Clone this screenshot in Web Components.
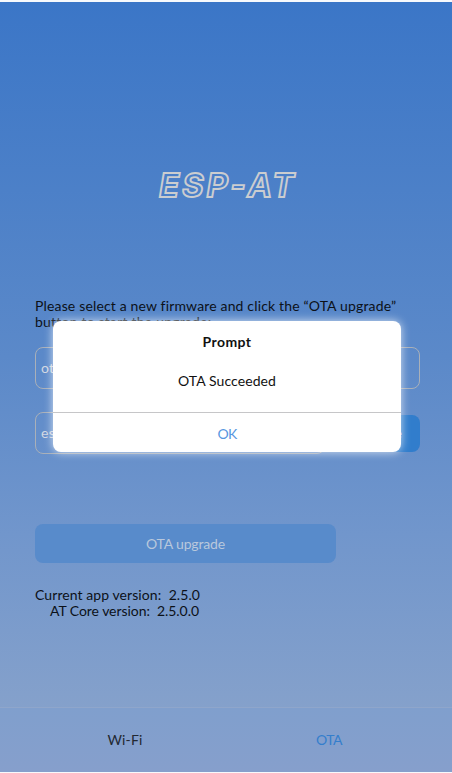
<!DOCTYPE html>
<html lang="en"><head><meta charset="utf-8"><title>ESP-AT</title>
<style>html,body{margin:0;height:100%;overflow:hidden;background:#fff}</style></head><body>
<esp-app></esp-app>
<script>
const make=(name,html,ready)=>customElements.define(name,class extends HTMLElement{
  constructor(){super();this.attachShadow({mode:'open'}).innerHTML=html;}
  connectedCallback(){if(ready)ready(this);}
});
// One line of text, tracked to the width given in its w attribute.
make('fit-text','<style>:host{display:inline-block;white-space:pre}span{display:inline-block}</style><span><slot></slot></span>',el=>{
  const w=+el.getAttribute('w');
  const span=el.shadowRoot.querySelector('span');
  const n=el.textContent.length;
  span.style.letterSpacing='0px';
  const s=(w-span.getBoundingClientRect().width)/n;
  span.style.letterSpacing=s+'px';
});
make('outline-title',`<style>:host{display:block;height:40px;font:italic 700 33px/40px Inter,sans-serif;color:transparent;-webkit-text-stroke:1.9px #cbcdd0;padding-left:159px}</style><slot></slot>`);
make('text-field',`<style>:host{display:flex;box-sizing:border-box;align-items:center;height:42px;border:1px solid #a9b0b9;border-radius:8px;padding-left:5px;color:#d2d8e2}</style><slot></slot>`);
make('action-button',`<style>:host{display:flex;box-sizing:border-box;align-items:center;justify-content:center;border-radius:8px;height:39px;background:#588bcb;color:#b9c8dc}
:host([kind=pick]){height:37px;width:95px;background:#317dcc;color:#d2dbe6;justify-content:flex-end;padding-right:18px}</style><slot></slot>`);
make('tab-bar',`<style>:host{display:flex;box-sizing:border-box;height:65px;border-top:1px solid #8fa6cb;background:linear-gradient(#809fcd,#869fcc);color:#222831}
div{flex:1;display:flex;align-items:center;justify-content:center;box-sizing:border-box;padding-left:23px}
div+div{padding:0 21px 0 0;color:#347ecc}</style><div><slot name="wifi"></slot></div><div><slot name="ota"></slot></div>`);
make('prompt-dialog',`<style>:host{display:flex;flex-direction:column;box-sizing:border-box;text-align:center;background:#fff;color:#111;border-radius:8px;box-shadow:0 0 10px rgba(255,255,255,.75)}
h2{font-size:14px;line-height:18px;margin:0;padding-top:12px;font-weight:700}
p{margin:0;padding-top:21px;line-height:18px;flex:1}
footer{height:39px;line-height:41px;border-top:1px solid #c6c6c8;color:#5797df}</style>
<h2><slot name="title"></slot></h2><p><slot></slot></p><footer><slot name="action"></slot></footer>`);
make('esp-app',`<style>
:host{display:flex;flex-direction:column;position:relative;box-sizing:border-box;width:452px;height:773px;border-top:2px solid #f7f9fc;border-bottom:1px solid #f7f9fc;background:linear-gradient(#3b76c7 0%,#5b89c9 46%,#7196cc 69%,#85a1cb 92%,#86a0cc 100%);font:14px/16px Lato,sans-serif;color:#0c1118}
main{flex:1;display:flex;flex-direction:column;padding:163px 32px 0 35px}
outline-title{margin-left:-35px}
.intro{margin-top:93px;height:32px;display:flex;flex-direction:column}
.file{margin-top:17px}
.row{margin-top:23px;display:flex;align-items:center}
.row text-field{width:290px}
.go{margin-top:70px;width:301px}
.versions{margin-top:24px;display:flex;flex-direction:column}
.core{margin-left:15px}
prompt-dialog{position:absolute;left:53px;top:319px;width:348px;height:131px}
</style>
<main>
<outline-title><fit-text w="138">ESP-AT</fit-text></outline-title>
<div class="intro"><fit-text w="361">Please select a new firmware and click the “OTA upgrade”</fit-text><fit-text w="176">button to start the upgrade:</fit-text></div>
<text-field class="file"><fit-text w="13">ot</fit-text></text-field>
<div class="row"><text-field><fit-text w="14">es</fit-text></text-field><action-button kind="pick">e</action-button></div>
<action-button class="go"><fit-text w="79">OTA upgrade</fit-text></action-button>
<div class="versions"><fit-text w="165">Current app version:  2.5.0</fit-text><fit-text class="core" w="149">AT Core version:  2.5.0.0</fit-text></div>
</main>
<tab-bar><fit-text slot="wifi" w="35">Wi-Fi</fit-text><fit-text slot="ota" w="26">OTA</fit-text></tab-bar>
<prompt-dialog><fit-text slot="title" w="49">Prompt</fit-text><fit-text w="98">OTA Succeeded</fit-text><fit-text slot="action" w="19">OK</fit-text></prompt-dialog>`);
</script></body></html>
